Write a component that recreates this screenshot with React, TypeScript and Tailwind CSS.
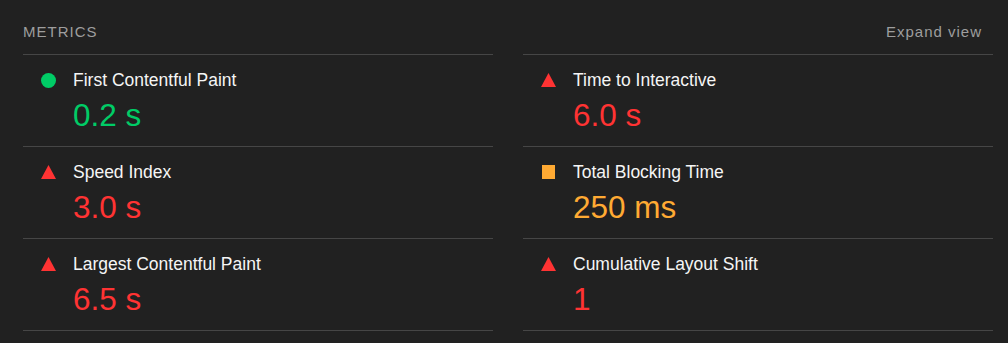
type Rating = "pass" | "average" | "fail";

const metrics: { title: string; value: string; rating: Rating }[] = [
  { title: "First Contentful Paint", value: "0.2 s", rating: "pass" },
  { title: "Time to Interactive", value: "6.0 s", rating: "fail" },
  { title: "Speed Index", value: "3.0 s", rating: "fail" },
  { title: "Total Blocking Time", value: "250 ms", rating: "average" },
  { title: "Largest Contentful Paint", value: "6.5 s", rating: "fail" },
  { title: "Cumulative Layout Shift", value: "1", rating: "fail" },
];

const valueColor: Record<Rating, string> = {
  pass: "text-[#0c6]",
  average: "text-[#fa3]",
  fail: "text-[#f33]",
};

function RatingIcon({ rating }: { rating: Rating }) {
  if (rating === "pass") {
    return <span className="block w-[15px] h-[15px] rounded-full bg-[#0c6]" />;
  }
  if (rating === "average") {
    return <span className="block w-[13px] h-[14px] bg-[#fa3]" />;
  }
  return (
    <svg width="15" height="14" viewBox="0 0 15 14" className="block">
      <polygon points="7.5,0 15,14 0,14" fill="#f33" />
    </svg>
  );
}

export default function App() {
  return (
    <div
      className="w-[1008px] h-[343px] bg-[#212121] pl-[23px] pr-[15px] overflow-hidden"
      style={{ fontFamily: '"Liberation Sans", Arial, sans-serif' }}
    >
      <div className="flex items-center justify-between pt-[22px] pb-[12px] pr-[11px] text-[15px] leading-5 tracking-[1px] text-[#9e9e9e]">
        <span className="uppercase">Metrics</span>
        <span>Expand view</span>
      </div>

      <div className="grid grid-cols-2 gap-x-[30px]">
        {metrics.map((m, i) => (
          <div
            key={m.title}
            className={`flex border-b border-[#464646] pt-[13px] pb-[13px] ${
              i < 2 ? "border-t" : ""
            }`}
          >
            <div className="w-[33px] pl-[18px] shrink-0">
              <div className="h-6 flex items-center justify-center w-[15px]">
                <RatingIcon rating={m.rating} />
              </div>
            </div>
            <div className="pl-[17px]">
              <div className="text-[17.5px] leading-6 text-[#f5f5f5]">{m.title}</div>
              <div className={`mt-[5px] text-[31.5px] leading-9 ${valueColor[m.rating]}`}>
                {m.value}
              </div>
            </div>
          </div>
        ))}
      </div>
    </div>
  );
}
